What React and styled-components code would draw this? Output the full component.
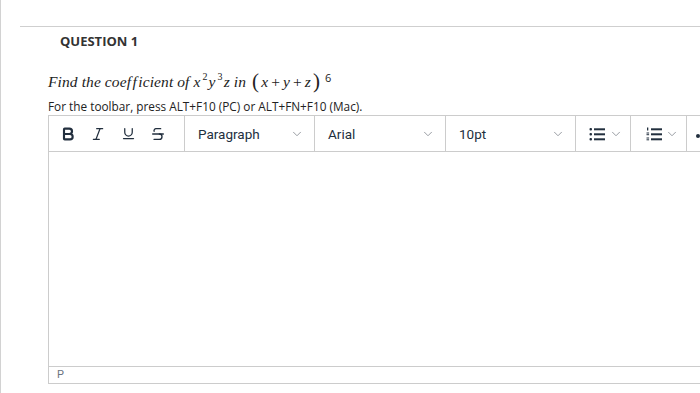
import React from "react";
import styled, { createGlobalStyle } from "styled-components";
import { Bold, Italic, Underline, Strikethrough, ChevronDown } from "lucide-react";

const GlobalStyle = createGlobalStyle`
  html, body {
    margin: 0;
    padding: 0;
    background: #fff;
    overflow: hidden;
  }
  body {
    font-family: "Open Sans", "Liberation Sans", sans-serif;
  }
`;

const Page = styled.div`
  min-height: 393px;
  border-left: 1px solid #d2d2d2;
  padding-top: 26px;
  box-sizing: border-box;
`;

const Rule = styled.div`
  margin-left: 19px;
  border-top: 1px solid #cfcfcf;
`;

const Title = styled.h3`
  margin: 0;
  padding: 5px 0 0 59px;
  font-size: 13px;
  font-weight: 700;
  line-height: 18px;
  color: #333;
`;

const Question = styled.p`
  margin: 20px 0 0 47px;
  font-family: "Liberation Serif", "Times New Roman", serif;
  font-style: italic;
  font-size: 15.5px;
  line-height: 20px;
  color: #222;
  letter-spacing: 0.1px;
`;

const Exp = styled.sup`
  font-size: 10px;
  vertical-align: 7px;
  line-height: 0;
  font-style: normal;
  margin: 0 1px 0 2px;
`;

const Paren = styled.span`
  font-style: normal;
  font-size: 21px;
  font-weight: 300;
  position: relative;
  top: 1px;
  margin: 0 2px;
`;

const Op = styled.span`
  font-style: normal;
  margin: 0 3px;
`;

const Power = styled.sup`
  font-family: "Open Sans", sans-serif;
  font-style: normal;
  font-size: 11px;
  line-height: 0;
  vertical-align: 5px;
  margin-left: 3px;
`;

const Hint = styled.p`
  margin: 6px 0 0 47px;
  font-size: 11.8px;
  line-height: 16px;
  color: #222;
`;

const Editor = styled.div`
  margin-top: 1px;
  margin-left: 47px;
  width: 720px;
  border: 1px solid #cccccc;
  border-right: none;
  display: flex;
  flex-direction: column;
`;

const Toolbar = styled.div`
  display: flex;
  height: 35px;
  border-bottom: 1px solid #cccccc;
  font-family: Roboto, "Liberation Sans", sans-serif;
  color: #222f3e;

  svg {
    flex-shrink: 0;
  }
`;

const Group = styled.div`
  display: flex;
  align-items: center;
  padding: ${(p) => p.$pad || "0"};
  width: ${(p) => p.$w}px;
  flex-shrink: 0;
  box-sizing: border-box;
  border-right: 1px solid #cccccc;
`;

const IconButton = styled.span`
  width: 30px;
  display: flex;
  justify-content: center;
  align-items: center;
`;

const SelectLabel = styled.span`
  flex: 1;
  font-size: 13.5px;
  padding-left: 13px;
`;

const Spacer = styled.span`
  flex: 1;
`;

const Chevron = styled(ChevronDown)`
  color: #8a8f96;
  margin-right: ${(p) => p.$mr || 10}px;
`;

const Content = styled.div`
  height: 214px;
  border-bottom: 1px solid #cccccc;
`;

const StatusBar = styled.div`
  height: 16px;
  padding-left: 8px;
  font-family: Roboto, "Liberation Sans", sans-serif;
  font-size: 11px;
  line-height: 16px;
  color: #6b7480;
`;

const BulletIcon = () => (
  <svg width="16" height="16" viewBox="0 0 16 16" fill="#222f3e">
    <rect x="0.5" y="2" width="2.5" height="2.5" rx="1" />
    <rect x="0.5" y="7" width="2.5" height="2.5" rx="1" />
    <rect x="0.5" y="12" width="2.5" height="2.5" rx="1" />
    <rect x="5" y="2.3" width="11" height="2" />
    <rect x="5" y="7.3" width="11" height="2" />
    <rect x="5" y="12.3" width="11" height="2" />
  </svg>
);

const NumberIcon = () => (
  <svg width="16" height="16" viewBox="0 0 16 16" fill="#222f3e">
    <rect x="1" y="1.5" width="1.3" height="3" />
    <rect x="0.5" y="6.5" width="2.6" height="1" />
    <rect x="0.5" y="8.2" width="2.6" height="1" />
    <rect x="0.5" y="11.5" width="2.6" height="1" />
    <rect x="0.5" y="13.3" width="2.6" height="1" />
    <rect x="5" y="2.3" width="11" height="2" />
    <rect x="5" y="7.3" width="11" height="2" />
    <rect x="5" y="12.3" width="11" height="2" />
  </svg>
);

const MoreIcon = () => (
  <svg width="20" height="16" viewBox="0 0 20 16" fill="#222f3e">
    <circle cx="2" cy="10" r="2" />
    <circle cx="9" cy="10" r="2" />
    <circle cx="16" cy="10" r="2" />
  </svg>
);

const selects = [
  { label: "Paragraph", w: 130 },
  { label: "Arial", w: 131 },
  { label: "10pt", w: 130 },
];

export default function App() {
  return (
    <>
      <GlobalStyle />
      <Page>
        <Rule />
        <Title>QUESTION 1</Title>
        <Question>
          Find the coef&#8202;f&#8202;icient of x<Exp>2</Exp>y<Exp>3</Exp>z in{" "}
          <Paren>(</Paren>x<Op>+</Op>y<Op>+</Op>z<Paren>)</Paren>
          <Power>6</Power>
        </Question>
        <Hint>For the toolbar, press ALT+F10 (PC) or ALT+FN+F10 (Mac).</Hint>
        <Editor>
          <Toolbar>
            <Group $w={136} $pad="0 0 0 4px">
              <IconButton><Bold size={16} strokeWidth={3.2} /></IconButton>
              <IconButton><Italic size={16} strokeWidth={1.8} /></IconButton>
              <IconButton><Underline size={15} strokeWidth={2} /></IconButton>
              <IconButton><Strikethrough size={16} strokeWidth={2} /></IconButton>
            </Group>
            {selects.map((s) => (
              <Group key={s.label} $w={s.w}>
                <SelectLabel>{s.label}</SelectLabel>
                <Chevron size={14} strokeWidth={1.5} />
              </Group>
            ))}
            <Group $w={55} $pad="0 0 0 13px">
              <BulletIcon />
              <Spacer />
              <Chevron size={14} strokeWidth={1.5} $mr={7} />
            </Group>
            <Group $w={56} $pad="0 0 0 15px">
              <NumberIcon />
              <Spacer />
              <Chevron size={14} strokeWidth={1.5} $mr={7} />
            </Group>
            <Group $w={60} $pad="0 0 0 9px">
              <MoreIcon />
            </Group>
          </Toolbar>
          <Content />
          <StatusBar>P</StatusBar>
        </Editor>
      </Page>
    </>
  );
}
